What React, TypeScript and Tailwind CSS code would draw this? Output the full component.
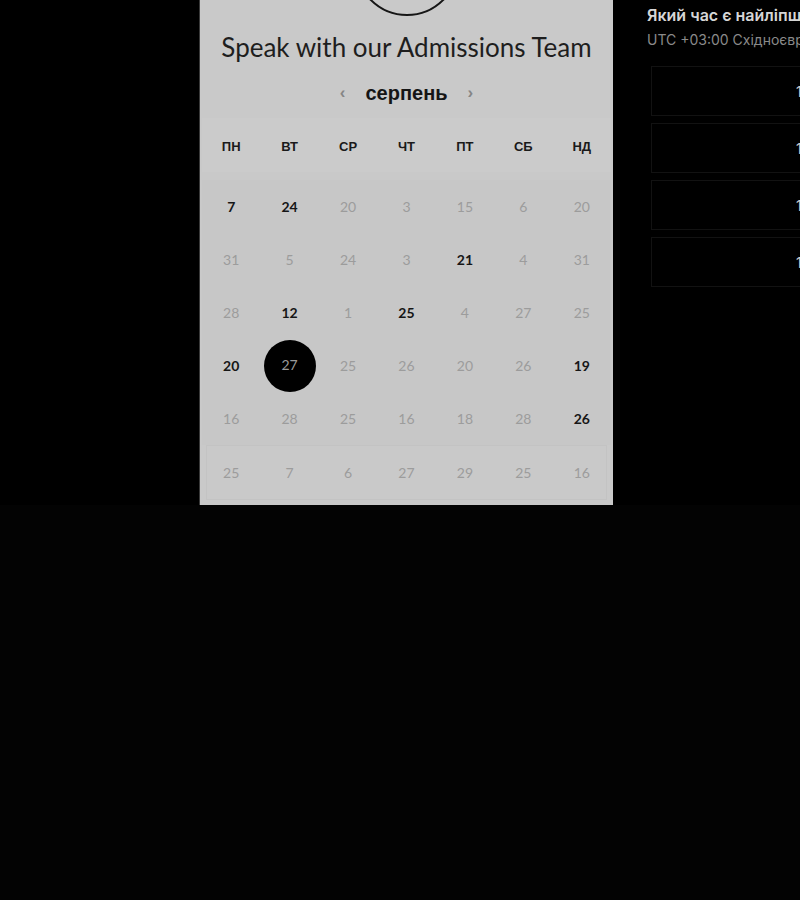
import React from 'react';

type Day = { n: number; on?: boolean; sel?: boolean };

const weekDays = ['ПН', 'ВТ', 'СР', 'ЧТ', 'ПТ', 'СБ', 'НД'];

const rows: Day[][] = [
  [{ n: 7, on: true }, { n: 24, on: true }, { n: 20 }, { n: 3 }, { n: 15 }, { n: 6 }, { n: 20 }],
  [{ n: 31 }, { n: 5 }, { n: 24 }, { n: 3 }, { n: 21, on: true }, { n: 4 }, { n: 31 }],
  [{ n: 28 }, { n: 12, on: true }, { n: 1 }, { n: 25, on: true }, { n: 4 }, { n: 27 }, { n: 25 }],
  [{ n: 20, on: true }, { n: 27, sel: true }, { n: 25 }, { n: 26 }, { n: 20 }, { n: 26 }, { n: 19, on: true }],
  [{ n: 16 }, { n: 28 }, { n: 25 }, { n: 16 }, { n: 18 }, { n: 28 }, { n: 26, on: true }],
  [{ n: 25 }, { n: 7 }, { n: 6 }, { n: 27 }, { n: 29 }, { n: 25 }, { n: 16 }],
];

const slots = ['10:00', '11:00', '12:00', '13:00'];

function DayCell({ day }: { day: Day }) {
  if (day.sel) {
    return (
      <div className="flex h-[53px] items-center justify-center">
        <div className="flex h-[52px] w-[52px] items-center justify-center rounded-full bg-black pb-[3px] text-[14px] text-[#9a9a9a]">
          {day.n}
        </div>
      </div>
    );
  }
  return (
    <div className="flex h-[53px] items-center justify-center">
      <span
        className={
          day.on
            ? 'text-[14px] font-bold text-[#161616]'
            : 'text-[14px] text-[#9c9c9c]'
        }
      >
        {day.n}
      </span>
    </div>
  );
}

function Calendar() {
  return (
    <div className="flex h-[505px] w-[414px] shrink-0 flex-col items-center overflow-hidden border-l border-[#3a3a3a] bg-[#c9c9c9] px-[2px]">
      {/* аватар, обрізаний зверху */}
      <div className="-mt-[88px] h-[104px] w-[104px] shrink-0 rounded-full border-[2.5px] border-[#161616]" />

      <h1 className="mt-[14px] whitespace-nowrap text-[26px] leading-[34px] text-[#1e1e1e] [font-family:Lato,'Open_Sans',sans-serif]">
        Speak with our Admissions Team
      </h1>

      <div className="mt-[16px] flex items-center gap-[20px] [font-family:'Liberation_Sans',Arial,sans-serif]">
        <span className="text-[17px] font-bold text-[#858585]">‹</span>
        <span className="text-[20px] font-bold leading-[26px] text-[#151515]">серпень</span>
        <span className="text-[17px] font-bold text-[#858585]">›</span>
      </div>

      <div className="mt-[12px] w-full">
        <div className="grid h-[54px] grid-cols-7 items-center bg-[#cbcbcb] pt-[4px]">
          {weekDays.map((d) => (
            <div
              key={d}
              className="text-center text-[13px] font-bold text-[#1a1a1a] [font-family:'Liberation_Sans',Arial,sans-serif]"
            >
              {d}
            </div>
          ))}
        </div>

        <div className="mt-[8px] bg-[#c7c7c7] [font-family:Lato,'Open_Sans',sans-serif]">
          {rows.slice(0, 5).map((row, i) => (
            <div key={i} className="grid grid-cols-7">
              {row.map((day, j) => (
                <DayCell key={j} day={day} />
              ))}
            </div>
          ))}
        </div>
        <div className="mx-[4px] border border-[#c3c3c3] bg-[#c9c9c9] [font-family:Lato,'Open_Sans',sans-serif]">
          <div className="-mx-[5px] grid grid-cols-7">
            {rows[5].map((day, j) => (
              <DayCell key={j} day={day} />
            ))}
          </div>
        </div>
      </div>
    </div>
  );
}

function TimePicker() {
  return (
    <div className="ml-[34px] flex w-[340px] shrink-0 flex-col [font-family:Inter,'Liberation_Sans',sans-serif]">
      <p className="mt-[4px] whitespace-nowrap text-[16px] font-semibold leading-[22px] text-[#d6d6d6]">
        Який час є найліпшим для вас?
      </p>
      <p className="mt-[4px] whitespace-nowrap text-[14px] leading-[20px] text-[#8a8a8a]">
        UTC +03:00 Східноєвропейський літній час
      </p>
      <div className="mt-[16px] ml-[4px] flex flex-col gap-[7px]">
        {slots.map((s) => (
          <div
            key={s}
            className="flex h-[50px] items-center border border-[#121212] pl-[144px] text-[14px] text-[#cfcfcf]"
          >
            {s}
          </div>
        ))}
      </div>
    </div>
  );
}

export default function App() {
  return (
    <div className="h-[900px] w-[800px] overflow-hidden bg-[#030303]">
      <div className="flex h-[505px] bg-black pl-[199px]">
        <Calendar />
        <TimePicker />
      </div>
    </div>
  );
}
